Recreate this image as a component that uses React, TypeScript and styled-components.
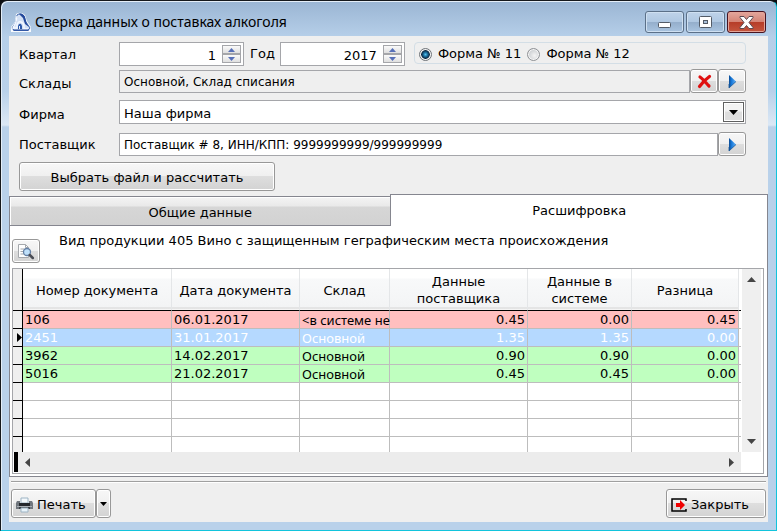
import React, { useState } from "react";
import styled, { createGlobalStyle, css } from "styled-components";

const GlobalStyle = createGlobalStyle`
  * { box-sizing: border-box; }
  body { margin: 0; background: #0b0d10; }
  body, button, input, select, table {
    font-family: "DejaVu Sans", Verdana, sans-serif;
    font-size: 13px;
    line-height: 16px;
    color: #000;
  }
`;

const line = "#a5a6aa";

const Window = styled.div`
  display: flex;
  flex-direction: column;
  min-height: 100vh;
  padding: 0 8px 8px 8px;
  border: 1px solid #15181c;
  border-right-color: #12c4dc;
  border-bottom-color: #12c4dc;
  border-radius: 7px 7px 0 0;
  box-shadow: inset 1px 1px 0 #e4eef8;
  background: linear-gradient(#9ab5d3 0, #b6cfe9 36px, #b9d1ea 90px, #dce8f5 124px, #b9d1ea 126px, #b9d1ea 100%);
`;

const TitleBar = styled.header`
  display: flex;
  height: 35px;
  padding-left: 2px;
`;

const Title = styled.h1`
  flex: 1;
  margin: 0;
  padding: 11px 0 0 4px;
  font: 400 14px/20px "Noto Sans", "Open Sans", sans-serif;
`;

const TitleIcon = styled.svg`
  margin-top: 11px;
`;

const WindowButtons = styled.div`
  display: flex;
  gap: 2px;
  padding: 10px 2px 0 0;
`;

const WindowButton = styled.button<{ $danger?: boolean }>`
  display: flex;
  align-items: center;
  justify-content: center;
  width: 39px;
  height: 22px;
  padding: 0;
  border: 1px solid ${(p) => (p.$danger ? "#471320" : "#5b7088")};
  border-radius: 3px;
  box-shadow: inset 0 0 0 1px ${(p) => (p.$danger ? "#e3a498" : "#cfe0f1")};
  background: ${(p) =>
    p.$danger
      ? "linear-gradient(#e3a79d, #d58577 48%, #b63c28 50%, #c4563f)"
      : "linear-gradient(#bfd3e9, #b0c8e2 48%, #94aecb 50%, #a9c4e0)"};
`;

const Client = styled.main`
  display: flex;
  flex: 1;
  flex-direction: column;
  background: #efefef;
`;

const Form = styled.form`
  padding: 6px 22px 3px 10px;
`;

const FormRow = styled.div<{ $gap?: number }>`
  display: flex;
  height: 24px;
  margin-top: ${(p) => p.$gap ?? 0}px;
`;

const Label = styled.label<{ $low?: boolean }>`
  width: 100px;
  padding-top: ${(p) => (p.$low ? 7 : 5)}px;
`;

const YearLabel = styled.label`
  padding: 4px 5px 0 6px;
`;

const fieldBox = css`
  border: 1px solid ${line};
  background: #fff;
`;

const Spin = styled.div`
  display: flex;
  width: 125px;
  padding: 2px;
  ${fieldBox}
`;

const SpinInput = styled.input`
  flex: 1;
  min-width: 0;
  padding: 3px 6px 0 0;
  border: 0;
  outline: 0;
  background: transparent;
  text-align: right;
`;

const SpinButtons = styled.div`
  display: flex;
  flex-direction: column;
  width: 19px;
`;

const SpinButton = styled.button`
  display: flex;
  flex: 1;
  align-items: center;
  justify-content: center;
  padding: 0;
  border: 1px solid ${line};
  background: linear-gradient(#fafafa, #dfdfdf);
`;

const RadioGroup = styled.fieldset`
  display: flex;
  flex: 1;
  align-items: center;
  gap: 6px;
  height: 22px;
  min-width: 0;
  margin: 0 0 0 9px;
  padding: 2px 4px 0;
  border: 1px solid #d3dee6;
  border-radius: 4px;
`;

const RadioLabel = styled.label`
  display: flex;
  align-items: center;
  gap: 6px;
  white-space: nowrap;
`;

const Radio = styled.input`
  width: 13px;
  height: 13px;
  margin: 0;
  appearance: none;
  border: 1px solid #8f9296;
  border-radius: 50%;
  box-shadow: inset 0 0 0 1px #f6f6f6;
  background: radial-gradient(circle at 60% 60%, #f4f4f4, #b9bdc2);
  &:checked {
    border-color: #6f7479;
    background: radial-gradient(circle at 50% 50%, #57c3ef 0, #1b6f9f 2px, #0b2740 4px, #d9dde0 5px);
  }
`;

const TextField = styled.input<{ $muted?: boolean }>`
  flex: 1;
  min-width: 0;
  height: 23px;
  margin-top: 1px;
  padding: 1px 4px 0;
  font-size: 12px;
  outline: 0;
  ${fieldBox}
  background: ${(p) => (p.$muted ? "#efefef" : "#fff")};
`;

const raised = css`
  border: 1px solid #989898;
  border-radius: 3px;
  box-shadow: inset 0 0 0 1px #fff;
  background: linear-gradient(#f7f7f7, #f0f0f0 48%, #dedede 50%, #d3d3d3);
`;

const IconButton = styled.button`
  display: flex;
  align-items: center;
  justify-content: center;
  width: 28px;
  height: 24px;
  padding: 0;
  ${raised}
`;

const SelectWrap = styled.div`
  position: relative;
  display: flex;
  flex: 1;
`;

const Select = styled.select`
  flex: 1;
  padding: 3px 28px 0 4px;
  appearance: none;
  border-radius: 0;
  outline: 0;
  ${fieldBox}
`;

const SelectArrow = styled.span`
  position: absolute;
  top: 2px;
  right: 2px;
  display: flex;
  align-items: center;
  justify-content: center;
  width: 21px;
  height: 20px;
  border: 1px solid #606060;
  box-shadow: inset 0 0 0 1px #fff;
  background: linear-gradient(#f3f3f3 45%, #dedede 50%);
  pointer-events: none;
`;

const CalcButton = styled.button`
  width: 256px;
  height: 29px;
  margin-top: 6px;
  padding: 2px 0 0;
  ${raised}
`;

const Tabs = styled.div`
  display: flex;
  align-items: flex-end;
`;

const Tab = styled.button<{ $active?: boolean }>`
  flex: ${(p) => (p.$active ? 377 : 382)} 1 0;
  height: ${(p) => (p.$active ? 32 : 30)}px;
  padding: ${(p) => (p.$active ? "1px" : "3px")} 0 0;
  border: 1px solid #85868f;
  ${(p) =>
    p.$active
      ? css`
          border-bottom: 0;
          background: #fff;
        `
      : css`
          border-right: 0;
          box-shadow: inset 1px 1px 0 #fff;
          background: linear-gradient(#f4f4f4, #e9e9e9 32%, #d6d6d6 36%, #d2d2d2);
        `}
`;

const Panel = styled.section`
  flex: 1;
  padding: 0 3px 2px 2px;
  border: 1px solid #85868f;
  border-top: 0;
  background: #fff;
`;

const PanelHead = styled.div`
  display: flex;
  gap: 19px;
  height: 42px;
`;

const PreviewButton = styled(IconButton)`
  margin-top: 13px;
`;

const PanelTitle = styled.p`
  margin: 0;
  padding-top: 7px;
`;

const GridFrame = styled.div`
  display: grid;
  grid-template-columns: 1fr 20px;
  padding-right: 2px;
  padding-bottom: 1px;
  border: 1px solid ${line};
`;

const Table = styled.table`
  width: 100%;
  table-layout: fixed;
  border-spacing: 0;
`;

const Col = styled.col<{ $w?: number }>`
  width: ${(p) => (p.$w ? `${p.$w}px` : "auto")};
`;

const Th = styled.th<{ $wrap: boolean }>`
  height: 42px;
  padding: 1px ${(p) => (p.$wrap ? 16 : 0)}px 0;
  border-right: 1px solid #e4e6e8;
  border-bottom: 1px solid #000;
  background: linear-gradient(#fff 0 9px, #f8f9fa 10px, #f3f4f5 38px, #d5d5d5 39px, #f4f4f4 40px);
  font-weight: 400;
  line-height: 17px;
`;

const Marker = styled.td<{ $head?: boolean; $last?: boolean }>`
  height: ${(p) => (p.$head ? 42 : p.$last ? 15 : 18)}px;
  padding: 0;
  border-right: 1px solid #000;
  border-bottom: ${(p) => (p.$last ? 0 : 1)}px solid #000;
  background: #efefef;
  text-align: right;
  line-height: 0;
`;

const tones = {
  red: ["#ffbfbf", "#000"],
  blue: ["#b5d9ff", "#fff"],
  green: ["#bfffbf", "#000"],
  none: ["#fff", "#000"],
};
type Tone = keyof typeof tones;

const Td = styled.td<{ $tone: Tone; $num?: boolean; $narrow?: boolean; $last?: boolean }>`
  height: ${(p) => (p.$last ? 15 : 18)}px;
  padding: 0 2px;
  border-right: 1px solid #bdbdbd;
  border-bottom: ${(p) => (p.$last ? 0 : 1)}px solid #bdbdbd;
  background: ${(p) => tones[p.$tone][0]};
  color: ${(p) => tones[p.$tone][1]};
  font-family: ${(p) => (p.$narrow ? '"Noto Sans", Tahoma, sans-serif' : "inherit")};
  text-align: ${(p) => (p.$num ? "right" : "left")};
  white-space: nowrap;
`;

const Tail = styled.td<{ $head?: boolean; $last?: boolean }>`
  padding: 0;
  border-bottom: ${(p) => (p.$last ? 0 : 1)}px solid ${(p) => (p.$head ? "#000" : "#bdbdbd")};
`;

const VScroll = styled.div`
  display: flex;
  flex-direction: column;
  justify-content: space-between;
  margin-left: 1px;
  padding: 8px 0;
  background: #efefef;
`;

const HScroll = styled.div`
  display: flex;
  justify-content: space-between;
  height: 20px;
  margin-left: 1px;
  border-left: 4px solid #000;
  padding: 0 5px;
  background: #ececec;
`;

const ScrollButton = styled.button`
  display: flex;
  align-items: center;
  justify-content: center;
  padding: 0;
  border: 0;
  background: transparent;
`;

const Footer = styled.footer`
  display: flex;
  justify-content: space-between;
  margin: 4px 2px 0;
  padding: 7px 0 4px;
  border-top: 1px solid #a0a0a0;
  box-shadow: inset 0 1px 0 #fff;
`;

const ButtonGroup = styled.div`
  display: flex;
`;

const FooterButton = styled.button<{ $w: number }>`
  display: flex;
  align-items: center;
  gap: 4px;
  width: ${(p) => p.$w}px;
  height: 29px;
  padding: 2px 4px 0;
  ${raised}
`;

const DropButton = styled(IconButton)`
  width: 15px;
  height: 29px;
`;

const Down = () => (
  <svg width="9" height="5" viewBox="0 0 9 5" aria-hidden="true"><path d="M0 0h9L4.500 5z" fill="#000" /></svg>
);

const SpinArrow = ({ up }: { up?: boolean }) => (
  <svg width="7" height="4" viewBox="0 0 7 4" aria-hidden="true">
    <path d={up ? "M0 4h7L3.500 0z" : "M0 0h7L3.500 4z"} fill="#5770b8" />
  </svg>
);

const BlueArrow = () => (
  <svg width="9" height="15" viewBox="0 0 9 15" aria-hidden="true">
    <defs>
      <linearGradient id="blueArrow" x1="0" x2="1" y1="0" y2="0">
        <stop offset="0" stopColor="#0b4b93" />
        <stop offset=".35" stopColor="#1677d8" />
        <stop offset="1" stopColor="#64b2f7" />
      </linearGradient>
    </defs>
    <path d="M1 1l7 6.500L1 14z" fill="url(#blueArrow)" />
    <path d="M1 10v4l7-6.500" fill="none" stroke="#1a5696" strokeWidth=".8" />
  </svg>
);

const RedCross = () => (
  <svg width="15" height="15" viewBox="0 0 15 15" aria-hidden="true">
    <path d="M3 3c3 2 6 6 9 9M12.500 2.500C9 5 5 9 2.500 12.500" fill="none" stroke="#df1010" strokeWidth="3.200" strokeLinecap="round" />
  </svg>
);

const ScrollArrow = ({ d, w, h }: { d: string; w: number; h: number }) => (
  <svg width={w} height={h} viewBox={`0 0 ${w} ${h}`} aria-hidden="true"><path d={d} fill="#454545" /></svg>
);

const widths = [10, 149, 128, 90, 138, 104, undefined, 2];
const headers = [
  { text: "Номер документа" },
  { text: "Дата документа" },
  { text: "Склад" },
  { text: "Данные поставщика", wrap: true },
  { text: "Данные в системе", wrap: true },
  { text: "Разница" },
];
const rows: { tone: Tone; cells: string[] }[] = [
  { tone: "red", cells: ["106", "06.01.2017", "<в системе не", "0.45", "0.00", "0.45"] },
  { tone: "blue", cells: ["2451", "31.01.2017", "Основной", "1.35", "1.35", "0.00"] },
  { tone: "green", cells: ["3962", "14.02.2017", "Основной", "0.90", "0.90", "0.00"] },
  { tone: "green", cells: ["5016", "21.02.2017", "Основной", "0.45", "0.45", "0.00"] },
  ...Array.from({ length: 4 }, () => ({ tone: "none" as Tone, cells: ["", "", "", "", "", ""] })),
];

function SpinBox({ id, initial }: { id: string; initial: number }) {
  const [value, setValue] = useState(initial);
  return (
    <Spin>
      <SpinInput id={id} inputMode="numeric" value={value} onChange={(e) => setValue(Number(e.target.value) || 0)} />
      <SpinButtons>
        <SpinButton type="button" aria-label="Больше" onClick={() => setValue(value + 1)}><SpinArrow up /></SpinButton>
        <SpinButton type="button" aria-label="Меньше" onClick={() => setValue(value - 1)}><SpinArrow /></SpinButton>
      </SpinButtons>
    </Spin>
  );
}

export default function App() {
  return (
    <>
      <GlobalStyle />
      <Window>
        <TitleBar>
          <TitleIcon width="20" height="21" viewBox="0 0 20 21" aria-hidden="true">
            <path d="M5 2q5-3 9 1l2 6 4 6v5H0v-5l4-5z" fill="#fff" opacity=".9" />
            <path d="M6 3q4-3 7 1l2 6 4 6-2 2.500H3L1 16l4-6z" fill="#d3e0f4" stroke="#4068b0" />
            <path d="M8 2q4-1 6 3l1 5 3 5-4-3-2-6z" fill="#24499b" />
            <path d="M6 4L5 10l-3 6h4v-3q1-4 4-3t3 4v3h4" fill="none" stroke="#f4f8ff" strokeWidth="1.400" />
            <path d="M7 17v-3q1-3 3-2l1 2v3z" fill="#2b57a9" />
            <path d="M8 17v-3h1v3z" fill="#e9f1fc" />
            <path d="M2 18h16" stroke="#24499b" />
          </TitleIcon>
          <Title>Сверка данных о поставках алкоголя</Title>
          <WindowButtons>
            <WindowButton aria-label="Свернуть">
              <svg width="13" height="16" viewBox="0 0 13 16"><rect x=".5" y="8.500" width="12" height="5" rx="1" fill="#fff" stroke="#535b66" /></svg>
            </WindowButton>
            <WindowButton aria-label="Развернуть">
              <svg width="13" height="12" viewBox="0 0 13 12"><rect x=".5" y=".5" width="12" height="11" rx="1" fill="#fff" stroke="#535b66" /><rect x="4.500" y="4.500" width="4" height="3" fill="#a9c0da" stroke="#535b66" /></svg>
            </WindowButton>
            <WindowButton aria-label="Закрыть окно" $danger>
              <svg width="15" height="13" viewBox="0 0 15 13"><path d="M1 .5h4l2.500 3L10 .5h4v1L10 6.500l4 5v1h-4l-2.500-3-2.500 3H1v-1l4-5-4-5z" fill="#fff" stroke="#5b4b52" /></svg>
            </WindowButton>
          </WindowButtons>
        </TitleBar>
        <Client>
          <Form onSubmit={(e) => e.preventDefault()}>
            <FormRow>
              <Label htmlFor="quarter">Квартал</Label>
              <SpinBox id="quarter" initial={1} />
              <YearLabel htmlFor="year">Год</YearLabel>
              <SpinBox id="year" initial={2017} />
              <RadioGroup aria-label="Форма">
                <RadioLabel><Radio type="radio" name="form" defaultChecked />Форма № 11</RadioLabel>
                <RadioLabel><Radio type="radio" name="form" />Форма № 12</RadioLabel>
              </RadioGroup>
            </FormRow>
            <FormRow $gap={3}>
              <Label $low htmlFor="stores">Склады</Label>
              <TextField id="stores" $muted readOnly value="Основной, Склад списания" />
              <IconButton type="button" aria-label="Очистить склады"><RedCross /></IconButton>
              <IconButton type="button" aria-label="Выбрать склады"><BlueArrow /></IconButton>
            </FormRow>
            <FormRow $gap={7}>
              <Label $low htmlFor="firm">Фирма</Label>
              <SelectWrap>
                <Select id="firm"><option>Наша фирма</option></Select>
                <SelectArrow><Down /></SelectArrow>
              </SelectWrap>
            </FormRow>
            <FormRow $gap={8}>
              <Label htmlFor="supplier">Поставщик</Label>
              <TextField id="supplier" defaultValue="Поставщик # 8, ИНН/КПП: 9999999999/999999999" />
              <IconButton type="button" aria-label="Выбрать поставщика"><BlueArrow /></IconButton>
            </FormRow>
            <CalcButton type="submit">Выбрать файл и рассчитать</CalcButton>
          </Form>
          <Tabs role="tablist">
            <Tab role="tab" aria-selected="false">Общие данные</Tab>
            <Tab role="tab" aria-selected="true" $active>Расшифровка</Tab>
          </Tabs>
          <Panel role="tabpanel">
            <PanelHead>
              <PreviewButton aria-label="Просмотр документа">
                <svg width="18" height="17" viewBox="0 0 18 17" aria-hidden="true">
                  <path d="M1.500 1.500h7l3 3v10h-10z" fill="#fff" stroke="#a5a8ac" />
                  <path d="M8.500 1.500v3h3M3.500 6h4M3.500 8.500h3M3.500 11h4" fill="none" stroke="#a5a8ac" />
                  <circle cx="10" cy="9" r="3.500" fill="#bfe0fa" stroke="#6580a5" strokeWidth="1.300" />
                  <path d="M12.800 12l3 3" stroke="#4a4d55" strokeWidth="2.500" strokeLinecap="round" />
                </svg>
              </PreviewButton>
              <PanelTitle>Вид продукции 405 Вино с защищенным геграфическим места происхождения</PanelTitle>
            </PanelHead>
            <GridFrame>
              <Table>
                <colgroup>{widths.map((w, i) => <Col key={i} $w={w} />)}</colgroup>
                <thead>
                  <tr>
                    <Marker $head />
                    {headers.map((h) => <Th key={h.text} scope="col" $wrap={!!h.wrap}>{h.text}</Th>)}
                    <Tail $head />
                  </tr>
                </thead>
                <tbody>
                  {rows.map((row, r) => {
                    const last = r === rows.length - 1;
                    return (
                      <tr key={r}>
                        <Marker $last={last}>
                          {row.tone === "blue" && (
                            <svg width="5" height="9" viewBox="0 0 5 9" aria-hidden="true"><path d="M0 0l5 4.500L0 9z" /></svg>
                          )}
                        </Marker>
                        {row.cells.map((c, i) => (
                          <Td key={i} $tone={row.tone} $num={i > 2} $narrow={i === 2} $last={last}>{c}</Td>
                        ))}
                        <Tail $last={last} />
                      </tr>
                    );
                  })}
                </tbody>
              </Table>
              <VScroll>
                <ScrollButton aria-label="Вверх"><ScrollArrow w={9} h={5} d="M0 5L4.500 0 9 5z" /></ScrollButton>
                <ScrollButton aria-label="Вниз"><ScrollArrow w={9} h={5} d="M0 0h9L4.500 5z" /></ScrollButton>
              </VScroll>
              <HScroll>
                <ScrollButton aria-label="Влево"><ScrollArrow w={9} h={9} d="M7 0v9L2 4.500z" /></ScrollButton>
                <ScrollButton aria-label="Вправо"><ScrollArrow w={9} h={9} d="M2 0v9l5-4.500z" /></ScrollButton>
              </HScroll>
            </GridFrame>
          </Panel>
          <Footer>
            <ButtonGroup>
              <FooterButton $w={85}>
                <svg width="17" height="16" viewBox="0 0 17 16" aria-hidden="true">
                  <path d="M5 1h7v5H5z" fill="#f4f9fc" stroke="#9db4c4" />
                  <path d="M1 4h3v3h9V4h3l1 2v6H0V6z" fill="#70767d" />
                  <path d="M3 6h11v3H3z" fill="#24282d" />
                  <path d="M1 9h15v1H1z" fill="#a9afb5" />
                  <path d="M3 10h11v2H3z" fill="#3c4147" />
                  <path d="M5 11h7v4H5z" fill="#e9f4fb" stroke="#9db4c4" />
                </svg>
                Печать
              </FooterButton>
              <DropButton aria-label="Варианты печати">
                <svg width="7" height="4" viewBox="0 0 7 4" aria-hidden="true"><path d="M0 0h7L3.500 4z" /></svg>
              </DropButton>
            </ButtonGroup>
            <FooterButton $w={100}>
              <svg width="16" height="14" viewBox="0 0 16 14" aria-hidden="true">
                <path d="M15 3V1H1v12h14v-2" fill="none" stroke="#000" strokeWidth="1.500" />
                <path d="M5 5h4V2l5 5-5 5V9H5z" fill="#f00000" />
              </svg>
              Закрыть
            </FooterButton>
          </Footer>
        </Client>
      </Window>
    </>
  );
}
